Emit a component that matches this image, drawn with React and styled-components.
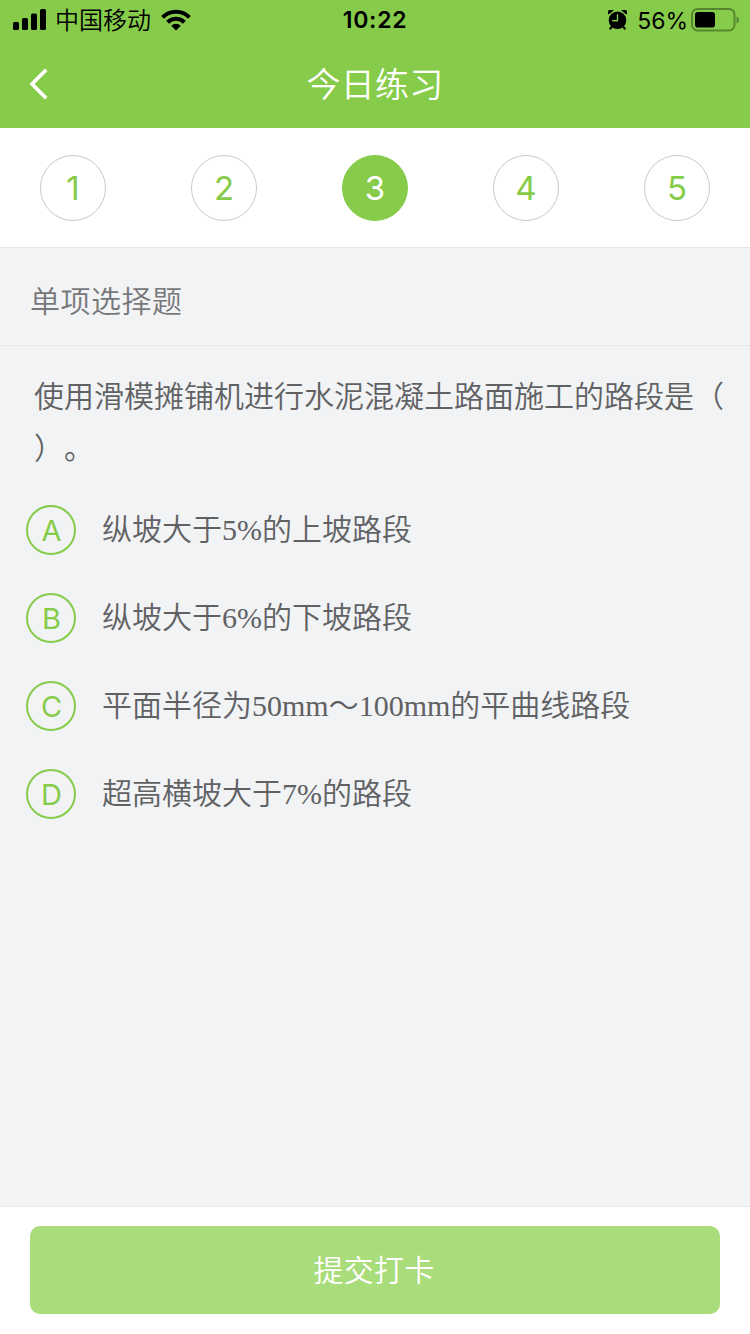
import React, { useState } from 'react'
import styled, { createGlobalStyle } from 'styled-components'

const GlobalStyle=createGlobalStyle`
*{
    box-sizing:border-box;
}
body{
    margin:0;
    font-family:Inter, "Noto Sans CJK SC", sans-serif;
    font-weight:350;
}
button{
    font-family:inherit;
    font-weight:inherit;
    padding:0;
    cursor:pointer;
}
`
const Page=styled.div`
width:750px;
height:1334px;
display:flex;
flex-direction:column;
background-color:#f2f3f5;
overflow:hidden;
`
const StatusBar=styled.div`
height:40px;
display:grid;
grid-template-columns:1fr auto 1fr;
grid-template-rows:40px;
align-items:center;
background-color:#86cc4a;
color:black;
& .side{
    display:flex;
    align-items:center;
    height:40px;
}
& .left{
    padding-left:13px;
}
& .right{
    justify-content:flex-end;
    padding-right:11px;
}
& svg{
    display:block;
    flex:none;
}
`
const Carrier=styled.span`
font-size:24px;
line-height:38px;
margin:0 10px 0 8px;
padding-top:2px;
`
const Time=styled.span`
font-size:23px;
font-weight:600;
line-height:39px;
letter-spacing:0.7px;
padding-top:1px;
`
const Percent=styled.span`
font-size:23px;
font-weight:400;
line-height:38px;
margin:0 3px 0 10px;
padding-top:2px;
`
const NavBar=styled.div`
height:88px;
display:grid;
grid-template-columns:80px 1fr 80px;
grid-template-rows:88px;
align-items:center;
background-color:#86cc4a;
& h1{
    margin:0;
    padding-top:2px;
    font-size:34px;
    font-weight:350;
    line-height:86px;
    letter-spacing:0.3px;
    text-align:center;
    color:white;
}
`
const BackButton=styled.button`
height:88px;
border:none;
background:transparent;
padding-left:29px;
& svg{
    display:block;
}
`
const Steps=styled.div`
height:120px;
padding:0 40px;
display:flex;
align-items:center;
justify-content:space-between;
background-color:white;
border-bottom:1px solid #e4e5e6;
`
const Step=styled.button`
width:66px;
height:66px;
border-radius:50%;
border:1px solid ${p=>p.$active?'#86cc4a':'#c8c8c8'};
background-color:${p=>p.$active?'#86cc4a':'white'};
color:${p=>p.$active?'white':'#86cc4a'};
font-size:33px;
font-weight:400;
line-height:64px;
text-align:center;
`
const SectionTitle=styled.div`
height:98px;
padding:0 30px;
font-size:30px;
line-height:107px;
letter-spacing:0.5px;
color:#77787a;
border-bottom:1px solid #e6e7e9;
`
const Question=styled.p`
margin:0;
padding:24px 0 0 34px;
font-size:30px;
line-height:52px;
white-space:nowrap;
text-spacing-trim:space-all;
color:#606163;
`
const Options=styled.div`
flex:1;
display:flex;
flex-direction:column;
gap:38px;
padding:31px 26px 0;
`
const Option=styled.div`
display:flex;
align-items:center;
gap:26px;
height:50px;
cursor:pointer;
& .letter{
    width:50px;
    height:50px;
    flex:none;
    border:2px solid #86cc4a;
    border-radius:50%;
    font-size:29px;
    font-weight:400;
    line-height:48px;
    text-align:center;
    padding-left:1px;
    color:#86cc4a;
    background-color:${p=>p.$picked?'#e6f5d9':'transparent'};
}
& .text{
    font-family:"Liberation Serif", "Noto Sans CJK SC", serif;
    font-size:30px;
    line-height:50px;
    white-space:nowrap;
    color:#606163;
}
`
const Footer=styled.div`
height:128px;
padding:19px 30px 20px;
background-color:white;
border-top:1px solid #e6e7e9;
`
const Submit=styled.button`
display:block;
width:100%;
height:88px;
border:none;
border-radius:10px;
background-color:#a9dc7a;
color:white;
font-size:30px;
line-height:88px;
letter-spacing:0.3px;
padding-right:2px;
`
const icons={
  signal:<svg width="34" height="22" viewBox="0 0 34 22">
    <rect x="0" y="13" width="6" height="8" rx="1.6"/>
    <rect x="9" y="9" width="6" height="12" rx="1.6"/>
    <rect x="18" y="4.5" width="6" height="16.5" rx="1.6"/>
    <rect x="27" y="0" width="6" height="21" rx="1.6"/>
  </svg>,
  wifi:<svg width="30" height="22" viewBox="0 0 30 22">
    <g fill="none" stroke="black" strokeWidth="4">
      <path d="M1.6 8.4A19 19 0 0 1 28.4 8.4"/>
      <path d="M6.6 13.3A12 12 0 0 1 23.4 13.3"/>
    </g>
    <path d="M10.2 16.8A6.8 6.8 0 0 1 19.8 16.8L15 21.6Z"/>
  </svg>,
  alarm:<svg width="19" height="21" viewBox="0 0 19 21">
    <circle cx="9.5" cy="10.2" r="8.8"/>
    <path d="M0.6 4.6A3.1 3.1 0 0 1 5.6 0.4Z"/>
    <path d="M18.4 4.6A3.1 3.1 0 0 0 13.4 0.4Z"/>
    <path d="M3.9 16.6L2.3 18.6M15.1 16.6L16.7 18.6" stroke="black" strokeWidth="2.2" strokeLinecap="round"/>
    <path d="M9.5 4.8V10.7H4.8" fill="none" stroke="#86cc4a" strokeWidth="1.4" strokeLinecap="round" strokeLinejoin="round"/>
  </svg>,
  battery:<svg width="48" height="24" viewBox="0 0 48 24">
    <rect x="1" y="1" width="42.5" height="21.5" rx="5.5" fill="none" stroke="#55852c" strokeWidth="2"/>
    <rect x="4" y="4" width="20" height="15.5" rx="2.8"/>
    <path d="M45.5 8.2Q48 9.2 48 11.9Q48 14.6 45.5 15.6Z" fill="#55852c"/>
  </svg>,
  back:<svg width="20" height="32" viewBox="0 0 20 32">
    <path d="M17.2 1.8L3 16L17.2 30.2" fill="none" stroke="white" strokeWidth="3.6"/>
  </svg>
}
const options=[
  {letter:'A',text:'纵坡大于5%的上坡路段'},
  {letter:'B',text:'纵坡大于6%的下坡路段'},
  {letter:'C',text:'平面半径为50mm～100mm的平曲线路段'},
  {letter:'D',text:'超高横坡大于7%的路段'}
]
export default function App() {
    const [step,setStep]=useState(3)
    const [picked,setPicked]=useState(null)
  return (
    <Page>
      <GlobalStyle/>
      <StatusBar>
          <div className="side left">
              {icons.signal}
              <Carrier>中国移动</Carrier>
              {icons.wifi}
          </div>
          <Time>10:22</Time>
          <div className="side right">
              {icons.alarm}
              <Percent>56%</Percent>
              {icons.battery}
          </div>
      </StatusBar>
      <NavBar>
          <BackButton aria-label="返回">{icons.back}</BackButton>
          <h1>今日练习</h1>
      </NavBar>
      <Steps>
          {[1,2,3,4,5].map(n=><Step key={n} $active={n===step} onClick={()=>setStep(n)}>{n}</Step>)}
      </Steps>
      <SectionTitle>单项选择题</SectionTitle>
      <Question>使用滑模摊铺机进行水泥混凝土路面施工的路段是（<br/>）。</Question>
      <Options>
          {options.map(o=><Option key={o.letter} $picked={picked===o.letter} onClick={()=>setPicked(o.letter)}>
              <span className="letter">{o.letter}</span>
              <span className="text">{o.text}</span>
          </Option>)}
      </Options>
      <Footer>
          <Submit>提交打卡</Submit>
      </Footer>
    </Page>
  )
}
